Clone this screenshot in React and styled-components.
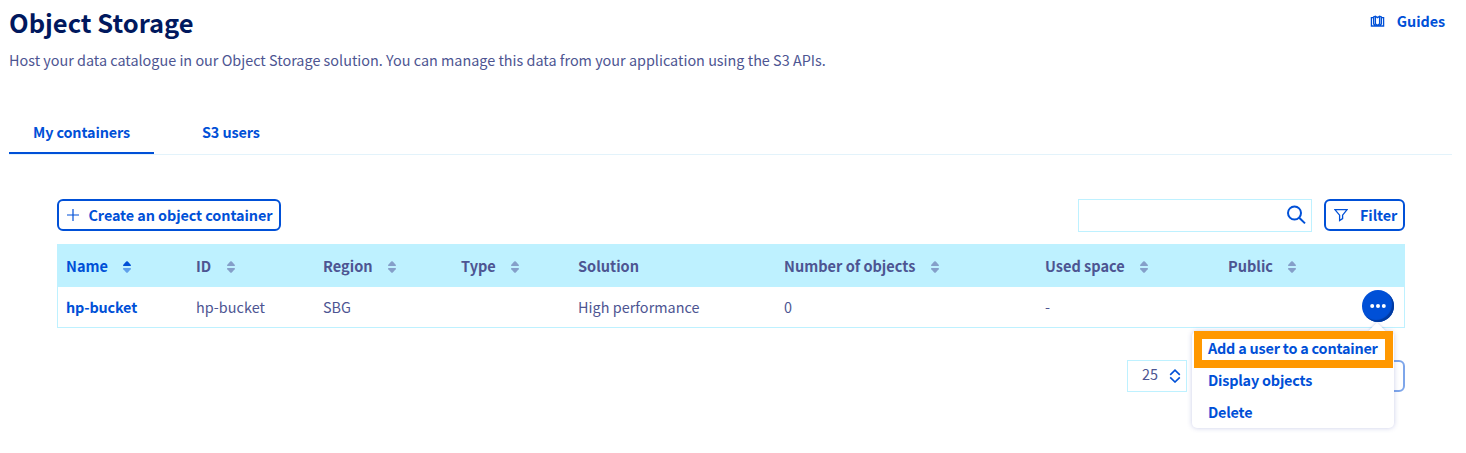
import React from "react";
import styled, { createGlobalStyle, css } from "styled-components";

const blue = "#0050d7";
const navy = "#00185e";
const slate = "#4d5592";
const sky = "#bef1ff";

const GlobalStyle = createGlobalStyle`
  * { box-sizing: border-box; }
  body {
    margin: 0;
    background: #fff;
    color: ${slate};
    font-family: "Noto Sans CJK SC", "Noto Sans", sans-serif;
    font-size: 14.4px;
    line-height: 20px;
  }
  button { font: inherit; margin: 0; cursor: pointer; }
`;

const strong = css`
  color: ${blue};
  font-weight: 600;
  letter-spacing: -0.08px;
  white-space: nowrap;
`;

const Page = styled.main`
  height: 453px;
  padding: 0 14px 0 9px;
  overflow: hidden;
`;

const Header = styled.header`
  display: flex;
  justify-content: space-between;
  align-items: flex-start;
  height: 50px;
`;

const Title = styled.h1`
  margin: 6px 0 0;
  color: ${navy};
  font-size: 25.5px;
  line-height: 32px;
  font-weight: 700;
  white-space: nowrap;
`;

const GuidesLink = styled.a`
  ${strong}
  display: flex;
  align-items: center;
  gap: 12px;
  margin: 11px 7px 0 0;
`;

const Intro = styled.p`
  margin: 0;
  letter-spacing: 0.005px;
  white-space: nowrap;
`;

const Tabs = styled.nav`
  display: flex;
  height: 41px;
  margin-top: 44px;
  border-bottom: 1px solid #e3f3fb;
`;

const Tab = styled.a`
  ${strong}
  width: ${(p) => p.$width}px;
  height: 40px;
  margin-right: 24px;
  padding: 8px 0 0 24px;
  border-bottom: 2px solid ${(p) => (p.$active ? blue : "transparent")};
  letter-spacing: -0.12px;
`;

const Content = styled.section`
  padding: 44px 47px 0 48px;
`;

const Toolbar = styled.div`
  display: flex;
  align-items: flex-start;
  height: 45px;
`;

const OutlineButton = styled.button`
  ${strong}
  display: flex;
  align-items: center;
  width: ${(p) => p.$width}px;
  height: 32px;
  padding: 0 0 0 8px;
  gap: ${(p) => p.$gap || 0}px;
  border: 2px solid ${blue};
  border-radius: 6px;
  background: #fff;
  opacity: ${(p) => (p.$faded ? 0.5 : 1)};
`;

const SearchBox = styled.div`
  display: flex;
  align-items: center;
  justify-content: flex-end;
  width: 234px;
  height: 33px;
  margin: 0 12px 0 auto;
  padding: 0 5px 1px 0;
  border: 1px solid ${sky};
`;

const Table = styled.div`
  border: 1px solid ${sky};
  height: 84px;
`;

const Row = styled.div`
  display: grid;
  grid-template-columns: 130px 127px 138px 117px 206px 261px 183px 130px 1fr;
  align-items: center;
  height: ${(p) => (p.$head ? 42 : 40)}px;
  background: ${(p) => (p.$head ? sky : "#fff")};
`;

const HeadCell = styled.div`
  display: flex;
  align-items: center;
  gap: 15.4px;
  padding: 0 0 0 8px;
  color: ${(p) => (p.$active ? blue : slate)};
  font-size: 14.55px;
  font-weight: 700;
  white-space: nowrap;

  svg { position: relative; top: 1px; }
`;

const Cell = styled.div`
  padding: 0 0 1px 8px;
  letter-spacing: 0.04px;
  white-space: nowrap;
`;

const BucketLink = styled.a`
  ${strong}
  letter-spacing: -0.15px;
`;

const ActionCell = styled.div`
  position: relative;
  display: flex;
  justify-content: flex-end;
  height: 34px;
  padding-right: 10px;
`;

const MoreButton = styled.button`
  display: flex;
  align-items: center;
  justify-content: center;
  width: 32px;
  height: 32px;
  padding: 0;
  border: 0;
  border-radius: 50%;
  background: ${blue};
  box-shadow: inset -2px -2px 1px #003a9f;
`;

const Menu = styled.div`
  position: absolute;
  z-index: 2;
  top: 41px;
  right: 10px;
  width: 202px;
  height: 97px;
  padding-top: 1px;
  border-radius: 5px;
  background: #fff;
  box-shadow: 0 0 5px rgba(77, 85, 180, 0.3);
`;

const MenuArrow = styled.span`
  position: absolute;
  top: -6px;
  right: 11px;
  width: 12px;
  height: 12px;
  background: #fff;
  transform: rotate(45deg);
  box-shadow: -1px -1px 2px rgba(77, 85, 180, 0.15);
`;

const MenuItem = styled.a`
  ${strong}
  position: relative;
  display: flex;
  align-items: center;
  height: 32px;
  padding-left: 16px;
  letter-spacing: -0.2px;
`;

const Highlight = styled.span`
  position: absolute;
  top: 0;
  left: 2px;
  width: 199px;
  height: 37px;
  border: 8px solid #ff9800;
`;

const Pager = styled.div`
  display: flex;
  justify-content: space-between;
  margin: 32px 0 0 1070px;
`;

const PageSize = styled.div`
  display: flex;
  align-items: center;
  justify-content: space-between;
  width: 60px;
  height: 32px;
  padding: 0 5px 4px 14px;
  border: 1px solid ${sky};

  svg { position: relative; top: 2px; }
`;

const Icon = ({ size = 16, width, height, children, ...rest }) => (
  <svg
    width={width || size}
    height={height || size}
    viewBox={`0 0 ${width || size} ${height || size}`}
    fill="none"
    stroke={blue}
    {...rest}
  >
    {children}
  </svg>
);

const GuideIcon = () => (
  <Icon width={15} height={14} strokeWidth="1.3">
    <path d="M3.4 3.6H1.4V12H13.6V3.6H11.6M5.4 11.6L3.6 10V3L5.4 2.2L7.5 3.6L9.6 2.2L11.4 3V10L9.6 11.6M5.4 2.2V9.8L7.5 11.4L9.6 9.8V2.2" />
  </Icon>
);

const PlusIcon = () => (
  <Icon width={12} height={12} strokeWidth="1.2">
    <path d="M0 6H12M6 0V12" />
  </Icon>
);

const SearchIcon = () => (
  <Icon size={20} strokeWidth="2">
    <circle cx="8.5" cy="8" r="6.5" />
    <path d="M13.2 12.7L19 18.4" />
  </Icon>
);

const FilterIcon = () => (
  <Icon width={14} height={14} strokeWidth="1.3">
    <path d="M0.9 1.6H13.1L8.6 7.2V10.6L5.6 12.6V7.2L0.9 1.6Z" />
  </Icon>
);

const SortIcon = ({ active }) => (
  <Icon width={8} height={12} stroke="none">
    <path
      d="M0.5 5Q-0.3 4.6 0.3 3.8L3.2 0.6Q4 -0.1 4.8 0.6L7.7 3.8Q8.3 4.6 7.5 5Z"
      fill={active ? blue : "#859fc9"}
    />
    <path
      d="M0.5 7Q-0.3 7.4 0.3 8.2L3.2 11.4Q4 12.1 4.8 11.4L7.7 8.2Q8.3 7.4 7.5 7Z"
      fill={active ? "#5fa0eb" : "#859fc9"}
    />
  </Icon>
);

const DotsIcon = () => (
  <Icon width={18} height={6} stroke="none" fill="#fff">
    <circle cx="3.2" cy="3" r="2" />
    <circle cx="9" cy="3" r="2" />
    <circle cx="14.8" cy="3" r="2" />
  </Icon>
);

const StepperIcon = () => (
  <Icon width={12} height={14} strokeWidth="1.6">
    <path d="M1.2 5.8L6 1.2L10.8 5.8M1.2 8.4L6 13L10.8 8.4" />
  </Icon>
);

const columns = [
  { label: "Name", sort: true, active: true },
  { label: "ID", sort: true },
  { label: "Region", sort: true },
  { label: "Type", sort: true },
  { label: "Solution" },
  { label: "Number of objects", sort: true },
  { label: "Used space", sort: true },
  { label: "Public", sort: true },
];

export default function App() {
  return (
    <Page>
      <GlobalStyle />
      <Header>
        <Title>Object Storage</Title>
        <GuidesLink>
          <GuideIcon />
          Guides
        </GuidesLink>
      </Header>
      <Intro>
        Host your data catalogue in our Object Storage solution. You can manage this data from your
        application using the S3 APIs.
      </Intro>
      <Tabs>
        <Tab $active $width={145}>My containers</Tab>
        <Tab $width={106}>S3 users</Tab>
      </Tabs>
      <Content>
        <Toolbar>
          <OutlineButton $width={224} $gap={9.5}>
            <PlusIcon />
            Create an object container
          </OutlineButton>
          <SearchBox>
            <SearchIcon />
          </SearchBox>
          <OutlineButton $width={81} $gap={12}>
            <FilterIcon />
            Filter
          </OutlineButton>
        </Toolbar>
        <Table>
          <Row $head>
            {columns.map((c) => (
              <HeadCell key={c.label} $active={c.active}>
                {c.label}
                {c.sort && <SortIcon active={c.active} />}
              </HeadCell>
            ))}
          </Row>
          <Row>
            <Cell><BucketLink>hp-bucket</BucketLink></Cell>
            <Cell>hp-bucket</Cell>
            <Cell>SBG</Cell>
            <Cell />
            <Cell>High performance</Cell>
            <Cell>0</Cell>
            <Cell>-</Cell>
            <Cell />
            <ActionCell>
              <MoreButton aria-label="Actions">
                <DotsIcon />
              </MoreButton>
              <Menu>
                <MenuArrow />
                <Highlight />
                <MenuItem>Add a user to a container</MenuItem>
                <MenuItem>Display objects</MenuItem>
                <MenuItem>Delete</MenuItem>
              </Menu>
            </ActionCell>
          </Row>
        </Table>
        <Pager>
          <PageSize>
            25
            <StepperIcon />
          </PageSize>
          <OutlineButton $width={81} $faded aria-label="Next page" />
        </Pager>
      </Content>
    </Page>
  );
}
